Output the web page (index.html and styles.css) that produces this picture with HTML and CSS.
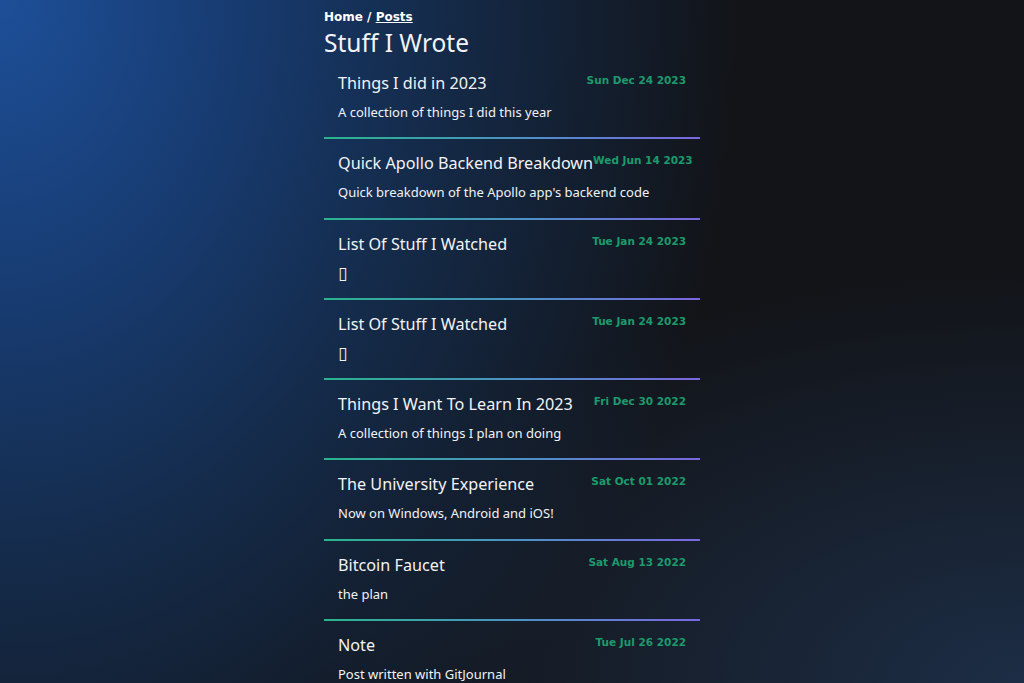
FILE: index.html
```html
<!DOCTYPE html>
<html lang="en">
<head>
    <meta charset="UTF-8">
    <meta name="viewport" content="width=device-width, initial-scale=1.0">
    <title>Posts</title>
    <link rel="stylesheet" href="styles.css">
</head>
<body>
    <main class="page">
        <nav class="crumbs">
            <a href="#">Home</a> / <a href="#" class="current">Posts</a>
        </nav>
        <h1>Stuff I Wrote</h1>

        <ul class="posts">
            <li class="post">
                <div class="post-head">
                    <h2>Things I did in 2023</h2>
                    <span class="date">Sun Dec 24 2023</span>
                </div>
                <p>A collection of things I did this year</p>
            </li>
            <li class="post">
                <div class="post-head">
                    <h2>Quick Apollo Backend Breakdown</h2>
                    <span class="date">Wed Jun 14 2023</span>
                </div>
                <p>Quick breakdown of the Apollo app's backend code</p>
            </li>
            <li class="post">
                <div class="post-head">
                    <h2>List Of Stuff I Watched</h2>
                    <span class="date">Tue Jan 24 2023</span>
                </div>
                <p><span class="glyph">▯</span></p>
            </li>
            <li class="post">
                <div class="post-head">
                    <h2>List Of Stuff I Watched</h2>
                    <span class="date">Tue Jan 24 2023</span>
                </div>
                <p><span class="glyph">▯</span></p>
            </li>
            <li class="post">
                <div class="post-head">
                    <h2>Things I Want To Learn In 2023</h2>
                    <span class="date">Fri Dec 30 2022</span>
                </div>
                <p>A collection of things I plan on doing</p>
            </li>
            <li class="post">
                <div class="post-head">
                    <h2>The University Experience</h2>
                    <span class="date">Sat Oct 01 2022</span>
                </div>
                <p>Now on Windows, Android and iOS!</p>
            </li>
            <li class="post">
                <div class="post-head">
                    <h2>Bitcoin Faucet</h2>
                    <span class="date">Sat Aug 13 2022</span>
                </div>
                <p>the plan</p>
            </li>
            <li class="post">
                <div class="post-head">
                    <h2>Note</h2>
                    <span class="date">Tue Jul 26 2022</span>
                </div>
                <p>Post written with GitJournal</p>
            </li>
        </ul>
    </main>
</body>
</html>
```

FILE: styles.css
```css
html {
    min-height: 100%;
    background-color: #121418;
    background-image:
        radial-gradient(ellipse 72% 140% at 0% 0%, #1d4f98 0%, #173b70 32%, #142a48 60%, rgba(18, 20, 24, 0) 100%),
        radial-gradient(ellipse 70% 60% at 100% 100%, #1c2d45 0%, rgba(18, 20, 24, 0) 100%);
    background-attachment: fixed;
}
body {
    margin: 0;
    padding: 8px 0 0;
    font-family: 'Noto Sans', 'Open Sans', sans-serif;
    color: #f1f3f6;
}
.page {
    width: 376px;
    margin: 0 auto;
}
.crumbs {
    font-family: 'DejaVu Sans', sans-serif;
    font-weight: bold;
    font-size: 12px;
    line-height: 18px;
    color: #fff;
}
.crumbs a {
    color: #fff;
    text-decoration: none;
}
.crumbs a.current {
    text-decoration: underline;
}
h1 {
    margin: 0;
    font-weight: normal;
    font-size: 24.5px;
    line-height: 33px;
}
.posts {
    list-style: none;
    margin: 0;
    padding: 0;
}
.post {
    padding: 11px 14px 15.3px;
    border-bottom: 2px solid transparent;
    border-image: linear-gradient(90deg, #28b58c, #4f8fc8 55%, #7a66e0) 1;
}
.post-head {
    display: flex;
    justify-content: space-between;
    align-items: flex-start;
}
h2 {
    margin: 0;
    font-weight: normal;
    font-size: 16.2px;
    line-height: 26px;
    white-space: nowrap;
}
.date {
    font-family: 'DejaVu Sans', sans-serif;
    font-weight: bold;
    font-size: 10.5px;
    line-height: 20px;
    color: #1c9b6c;
    white-space: nowrap;
}
.post p {
    margin: 6px 0 0;
    font-size: 13px;
    line-height: 20px;
}
/* placeholder box where an emoji would be */
.glyph {
    font-family: 'DejaVu Sans', sans-serif;
    font-size: 17px;
    line-height: 16px;
    vertical-align: top;
    display: inline-block;
    padding-top: 2px;
}
```
